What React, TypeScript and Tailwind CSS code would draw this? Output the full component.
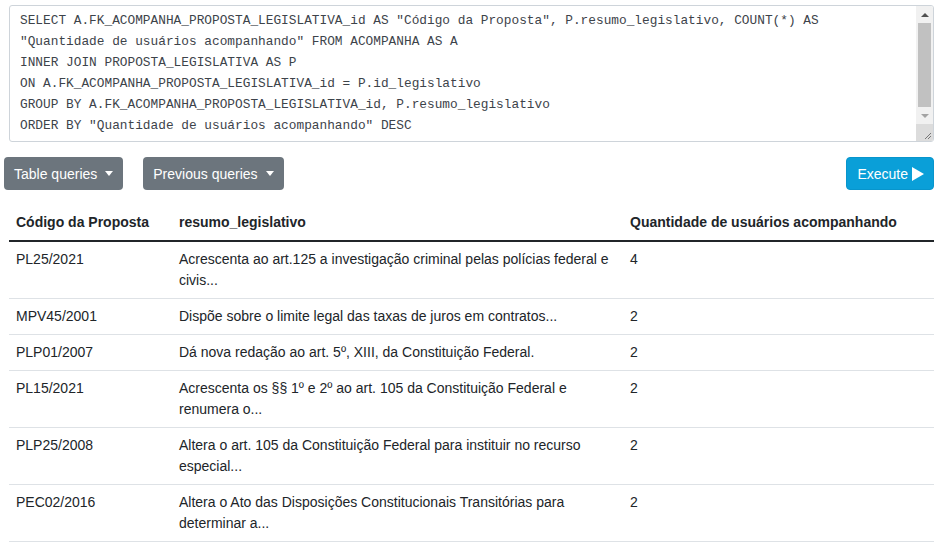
const query = [
  'SELECT A.FK_ACOMPANHA_PROPOSTA_LEGISLATIVA_id AS "Código da Proposta", P.resumo_legislativo, COUNT(*) AS',
  '"Quantidade de usuários acompanhando" FROM ACOMPANHA AS A',
  'INNER JOIN PROPOSTA_LEGISLATIVA AS P',
  'ON A.FK_ACOMPANHA_PROPOSTA_LEGISLATIVA_id = P.id_legislativo',
  'GROUP BY A.FK_ACOMPANHA_PROPOSTA_LEGISLATIVA_id, P.resumo_legislativo',
  'ORDER BY "Quantidade de usuários acompanhando" DESC',
];

const rows = [
  { code: 'PL25/2021', resumo: 'Acrescenta ao art.125 a investigação criminal pelas polícias federal e civis...', qtd: 4 },
  { code: 'MPV45/2001', resumo: 'Dispõe sobre o limite legal das taxas de juros em contratos...', qtd: 2 },
  { code: 'PLP01/2007', resumo: 'Dá nova redação ao art. 5º, XIII, da Constituição Federal.', qtd: 2 },
  { code: 'PL15/2021', resumo: 'Acrescenta os §§ 1º e 2º ao art. 105 da Constituição Federal e renumera o...', qtd: 2 },
  { code: 'PLP25/2008', resumo: 'Altera o art. 105 da Constituição Federal para instituir no recurso especial...', qtd: 2 },
  { code: 'PEC02/2016', resumo: 'Altera o Ato das Disposições Constitucionais Transitórias para determinar a...', qtd: 2 },
];

function Caret() {
  return <span className="inline-block ml-[8px] align-middle border-x-[4.5px] border-x-transparent border-t-[5px] border-t-white" />;
}

function FakeScrollbar() {
  return (
    <div className="flex flex-col w-[17px] bg-[#f1f1f1]">
      <div className="h-[17px] flex items-center justify-center">
        <span className="border-x-[4px] border-x-transparent border-b-[4px] border-b-[#505050]" />
      </div>
      <div className="mx-[2px] h-[84px] bg-[#c1c1c1]" />
      <div className="h-[17px] flex items-center justify-center">
        <span className="border-x-[4px] border-x-transparent border-t-[4px] border-t-[#a3a3a3]" />
      </div>
      <div className="flex-1 bg-[#dcdcdc] relative">
        <svg className="absolute right-[1px] bottom-[1px]" width="10" height="10" viewBox="0 0 10 10">
          <path d="M9 3 L3 9 M9 6 L6 9" stroke="#777" strokeWidth="1" />
        </svg>
      </div>
    </div>
  );
}

export default function App() {
  return (
    <div className="w-[939px] h-[543px] overflow-hidden bg-white pl-[9px] pr-[5px] pt-[5px] text-[#212529] font-['Segoe_UI','Liberation_Sans',sans-serif] text-[14px]">
      <div className="flex h-[137px] border border-[#ced4da] rounded-[3px] overflow-hidden">
        <div className="flex-1 pl-[10px] pt-[4px] font-['Liberation_Mono',monospace] text-[12.8px] leading-[21px] text-[#3d434a] whitespace-pre">
          {query.map((l, i) => (
            <div key={i}>{l}</div>
          ))}
        </div>
        <FakeScrollbar />
      </div>

      <div className="flex items-center mt-[15px] -ml-[5px]">
        <button className="h-[33px] px-[10px] rounded-[4px] bg-[#6c757d] text-white text-[14px] leading-none flex items-center">
          Table queries
          <Caret />
        </button>
        <button className="ml-[20px] h-[33px] px-[10px] rounded-[4px] bg-[#6c757d] text-white text-[14px] leading-none flex items-center">
          Previous queries
          <Caret />
        </button>
        <button className="ml-auto h-[33px] pl-[10px] pr-[8px] rounded-[4px] bg-[#0a9fd8] border border-[#0895cc] text-white text-[14px] leading-none flex items-center">
          Execute
          <svg className="ml-[3px]" width="14" height="16" viewBox="0 0 14 16">
            <path d="M1 1 L13 8 L1 15 Z" fill="white" />
          </svg>
        </button>
      </div>

      <table className="w-full mt-[15px] table-fixed border-collapse leading-[21px]">
        <colgroup>
          <col className="w-[163px]" />
          <col className="w-[451px]" />
          <col />
        </colgroup>
        <thead>
          <tr className="border-b-2 border-[#212529]">
            <th className="text-left font-bold px-[7px] py-[7px]">Código da Proposta</th>
            <th className="text-left font-bold px-[7px] py-[7px]">resumo_legislativo</th>
            <th className="text-left font-bold px-[7px] py-[7px]">Quantidade de usuários acompanhando</th>
          </tr>
        </thead>
        <tbody>
          {rows.map((r) => (
            <tr key={r.code} className="border-b border-[#dee2e6] align-top">
              <td className="px-[7px] py-[7px]">{r.code}</td>
              <td className="px-[7px] py-[7px]">{r.resumo}</td>
              <td className="px-[7px] py-[7px]">{r.qtd}</td>
            </tr>
          ))}
        </tbody>
      </table>
    </div>
  );
}
